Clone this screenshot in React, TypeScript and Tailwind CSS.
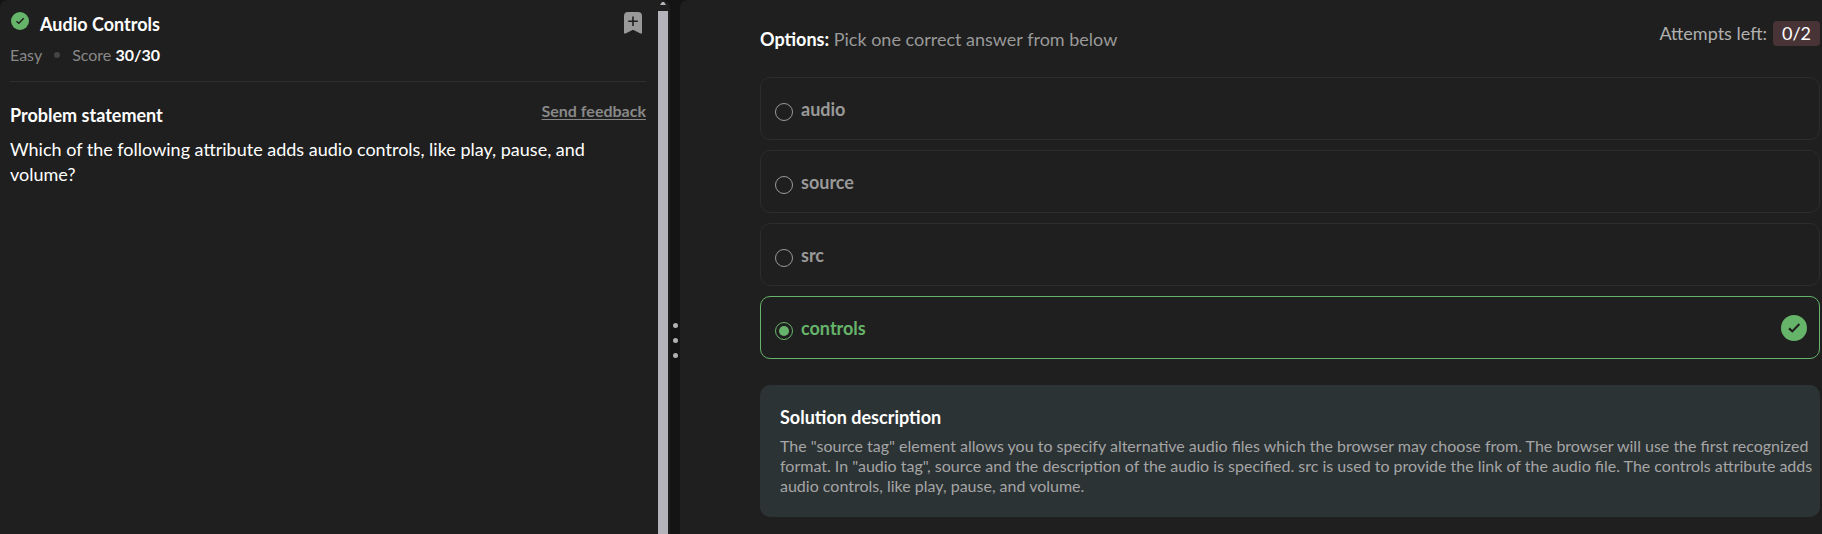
import { useState } from "react";

const options = ["audio", "source", "src", "controls"];
const correct = "controls";

function CheckBadge({ className }: { className: string }) {
  return (
    <svg viewBox="0 0 26 26" className={className} aria-hidden="true">
      <circle cx="13" cy="13" r="13" fill="#66b36a" />
      <path d="M8 13.4 11.3 16.4 18.4 9" fill="none" stroke="#1f1f1f" strokeWidth="2.1" />
    </svg>
  );
}

function BookmarkIcon() {
  return (
    <svg viewBox="0 0 18 22" className="block h-[22px] w-[18px]" aria-hidden="true">
      <path d="M4 0h10a4 4 0 0 1 4 4v16.500c0 1-.6 1.400-1.500 1L9 17.800 1.500 21.500C.6 21.900 0 21.500 0 20.500V4a4 4 0 0 1 4-4Z" fill="#999" />
      <path d="M9 4.500v9.500M4.200 9.300h9.600" stroke="#1f1f1f" strokeWidth="1.600" />
    </svg>
  );
}

function ProblemPanel() {
  return (
    <section className="flex min-w-0 rounded-t-lg bg-[#1f1f1f]">
      <div className="min-w-0 flex-1 pr-3 pl-2.5">
        <header className="flex items-start justify-between border-b border-[#2e2e2e] pt-3 pb-4">
          <div>
            <div className="flex gap-[11px]">
              <CheckBadge className="ml-px size-[18px]" />
              <h1 className="text-[18px] leading-6 font-bold text-white">Audio Controls</h1>
            </div>
            <div className="mt-[9px] flex items-center text-[16px] leading-5 text-[#888]">
              <span>Easy</span>
              <span className="mx-3 size-1.5 rounded-full bg-[#444]" />
              <span>
                Score <b className="text-white">30/30</b>
              </span>
            </div>
          </div>
          <button type="button" aria-label="Bookmark" className="mr-1">
            <BookmarkIcon />
          </button>
        </header>
        <div className="mt-[19px] flex items-start justify-between">
          <h2 className="pt-0.5 text-[18px] leading-6 font-bold text-white">Problem statement</h2>
          <a href="#feedback" className="text-[16px] leading-5 font-bold text-[#888] underline underline-offset-2">
            Send feedback
          </a>
        </div>
        <p className="mt-2.5 text-[18px] leading-[25px] text-white">
          Which of the following attribute adds audio controls, like play, pause, and volume?
        </p>
      </div>
      <div className="mr-0.5 flex w-2.5 flex-col items-center" aria-hidden="true">
        <svg viewBox="0 0 6 3" className="mt-0.5 mb-1.5 h-[3px] w-1.5">
          <path d="M0 3 2 0h2l2 3Z" fill="#b5b5bb" />
        </svg>
        <div className="w-full flex-1 bg-[#b3b3b9]" />
      </div>
    </section>
  );
}

function ResizeHandle() {
  return (
    <div className="flex flex-col items-center justify-center gap-2.5 bg-[#141414] pt-[146px]">
      <span className="size-[5px] rounded-full bg-[#b0b0b0]" />
      <span className="size-[5px] rounded-full bg-[#b0b0b0]" />
      <span className="size-[5px] rounded-full bg-[#b0b0b0]" />
    </div>
  );
}

function AnswerPanel() {
  const [selected, setSelected] = useState(correct);
  return (
    <section className="min-w-0 rounded-tl-lg bg-[#1f1f1f] pt-[21px] pr-0.5 pl-20">
      <div className="flex items-start justify-between">
        <p className="pt-1.5 pb-px text-[18px] leading-6 text-[#999]">
          <b className="text-white">Options:</b> Pick one correct answer from below
        </p>
        <p className="flex items-center gap-1.5 text-[18px] leading-[25px] text-[#b0b0b0]">
          Attempts left:
          <span className="rounded bg-[#483437] px-[9px] text-white">0/2</span>
        </p>
      </div>
      <div className="mt-[25px] flex flex-col gap-2.5" role="radiogroup" aria-label="Options">
        {options.map((option) => {
          const active = option === selected;
          return (
            <label
              key={option}
              className={
                "flex h-[63px] items-center rounded-[10px] border pr-3 pl-3.5 " +
                (active ? "border-[#66b36a] text-[#66b36a]" : "border-[#2c2c2c] text-[#999]")
              }
            >
              <input
                type="radio"
                name="answer"
                value={option}
                checked={active}
                onChange={() => setSelected(option)}
                className="mt-1.5 grid size-[18px] appearance-none place-content-center rounded-full border border-current before:size-2.5 before:rounded-full checked:before:bg-current"
              />
              <span className="ml-2 flex-1 text-[18px] leading-6 font-bold">{option}</span>
              {active && option === correct && <CheckBadge className="size-[26px]" />}
            </label>
          );
        })}
      </div>
      <section className="mt-[26px] rounded-[10px] bg-[#2c3335] py-5 pr-1 pl-5">
        <h2 className="text-[18px] leading-6 font-bold text-white">Solution description</h2>
        <p className="mt-[7px] mb-px text-[16px] leading-5 text-[#a5a5a5]">
          The "source tag" element allows you to specify alternative audio files which the browser may choose from. The
          browser will use the first recognized format. In "audio tag", source and the description of the audio is
          specified. src is used to provide the link of the audio file. The controls attribute adds audio controls, like
          play, pause, and volume.
        </p>
      </section>
    </section>
  );
}

export default function App() {
  return (
    <main className="grid min-h-screen grid-cols-[670fr_10px_1142fr] bg-[#141414] font-['Lato','Open_Sans',sans-serif]">
      <ProblemPanel />
      <ResizeHandle />
      <AnswerPanel />
    </main>
  );
}
